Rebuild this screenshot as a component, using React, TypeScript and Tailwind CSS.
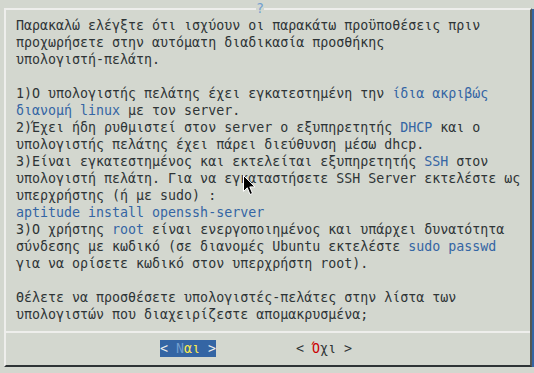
import React from 'react';

type Seg = { t: string; blue?: boolean };

const lines: Seg[][] = [
  [{ t: 'Παρακαλώ ελέγξτε ότι ισχύουν οι παρακάτω προϋποθέσεις πριν' }],
  [{ t: 'προχωρήσετε στην αυτόματη διαδικασία προσθήκης' }],
  [{ t: 'υπολογιστή-πελάτη.' }],
  [{ t: '' }],
  [{ t: '1)Ο υπολογιστής πελάτης έχει εγκατεστημένη την ' }, { t: 'ίδια ακριβώς', blue: true }],
  [{ t: 'διανομή linux', blue: true }, { t: ' με τον server.' }],
  [{ t: '2)Έχει ήδη ρυθμιστεί στον server ο εξυπηρετητής ' }, { t: 'DHCP', blue: true }, { t: ' και ο' }],
  [{ t: 'υπολογιστής πελάτης έχει πάρει διεύθυνση μέσω dhcp.' }],
  [{ t: '3)Είναι εγκατεστημένος και εκτελείται εξυπηρετητής ' }, { t: 'SSH', blue: true }, { t: ' στον' }],
  [{ t: 'υπολογιστή πελάτη. Για να εγκαταστήσετε SSH Server εκτελέστε ως' }],
  [{ t: 'υπερχρήστης (ή με sudo) :' }],
  [{ t: 'aptitude install openssh-server', blue: true }],
  [{ t: '3)Ο χρήστης ' }, { t: 'root', blue: true }, { t: ' είναι ενεργοποιημένος και υπάρχει δυνατότητα' }],
  [{ t: 'σύνδεσης με κωδικό (σε διανομές Ubuntu εκτελέστε ' }, { t: 'sudo passwd', blue: true }],
  [{ t: 'για να ορίσετε κωδικό στον υπερχρήστη root).' }],
  [{ t: '' }],
  [{ t: 'Θέλετε να προσθέσετε υπολογιστές-πελάτες στην λίστα των' }],
  [{ t: 'υπολογιστών που διαχειρίζεστε απομακρυσμένα;' }],
];

const App: React.FC = () => {
  return (
    <div
      className="relative w-[534px] h-[373px] overflow-hidden bg-[#d3d7cf] text-[#2e3436] text-[13.3px] leading-[17px] whitespace-pre"
      style={{ fontFamily: '"DejaVu Sans Mono", monospace' }}
    >
      <div className="flex pt-[8px] pl-[4px]">
        {/* dialog box */}
        <div className="w-[528px] h-[359px] flex flex-col border-t-2 border-l-2 border-t-[#eeeeec] border-l-[#eeeeec] border-b-2 border-r-2 border-b-[#2e3436] border-r-[#555753]">
          <div className="pt-[7px] pl-[10px]">
            {lines.map((line, i) => (
              <div key={i} className="h-[17px]">
                {line.map((s, j) => (
                  <span key={j} className={s.blue ? 'text-[#3465a4]' : ''}>
                    {s.t}
                  </span>
                ))}
              </div>
            ))}
          </div>

          {/* separator */}
          <div className="mt-[8px] flex h-[2px]">
            <div className="flex-1 bg-[#eeeeec]" />
          </div>

          {/* buttons */}
          <div className="mt-[7px] flex h-[17px] pl-[154px]">
            <div className="w-[56px] bg-[#3465a4]">
              <span className="text-[#eeeeec]">{'< '}</span>
              <span className="text-[#729fcf]">Ν</span>
              <span className="text-[#fce94f]">αι</span>
              <span className="text-[#eeeeec]">{' >'}</span>
            </div>
            <div className="ml-[80px] w-[56px]">
              <span>{'< '}</span>
              <span className="text-[#cc0000]">Ό</span>
              <span>χι</span>
              <span>{' >'}</span>
            </div>
          </div>
        </div>
        {/* blue backdrop peeking on the right */}
        <div className="w-[2px] h-[358px] mt-[1px] bg-[#3465a4]" />
      </div>

      {/* title */}
      <div className="absolute top-0 left-[256px] w-[8px] h-[17px] bg-[#d3d7cf] text-[#729fcf]">?</div>

      {/* mouse pointer */}
      <svg className="absolute left-[243px] top-[175px]" width="13" height="21" viewBox="0 0 13 21">
        <path
          d="M0.5 0.5 L0.5 16.5 L4.3 12.8 L7 19.5 L9.5 18.4 L6.8 11.9 L12 11.9 Z"
          fill="#000"
          stroke="#fff"
          strokeWidth="1"
          strokeLinejoin="miter"
        />
      </svg>
    </div>
  );
};

export default App;
